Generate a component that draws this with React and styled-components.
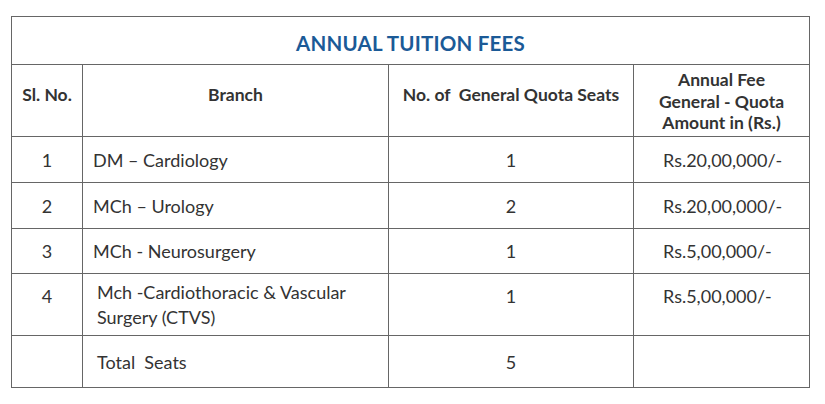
import React from 'react'
import styled, { createGlobalStyle } from 'styled-components';

const GlobalStyle = createGlobalStyle`
  body {
    margin: 0;
    background: #fff;
    font-family: Lato, 'Open Sans', sans-serif;
  }
`;

const Page = styled.div`
  padding: 16px 16px 0 11px;
`;

const FeeTable = styled.table`
  width: 798px;
  border-collapse: collapse;
  table-layout: fixed;
  color: #333;
  font-size: 18px;
`;

const TitleCell = styled.th`
  height: 43px;
  border: 1px solid #666;
  color: #1b5a97;
  font-size: 20.5px;
  font-weight: 700;
  letter-spacing: 0.2px;
  text-align: center;
  vertical-align: middle;
  padding: 4px 0 0;
`;

const HeadCell = styled.th`
  border: 1px solid #666;
  font-weight: 700;
  font-size: 17.5px;
  line-height: 21.5px;
  text-align: center;
  vertical-align: ${p => (p.$multi ? 'middle' : 'top')};
  padding: ${p => (p.$multi ? '2px 4px 0' : '19px 4px 0')};
`;

const Row = styled.tr`
  height: ${p => p.$h}px;
`;

const Cell = styled.td`
  border: 1px solid #666;
  line-height: 25px;
  text-align: ${p => p.$align || 'center'};
  vertical-align: ${p => (p.$top ? 'top' : 'middle')};
  padding: ${p => (p.$top ? '10px' : '1px')} ${p => p.$pr || 0}px 0 ${p => p.$pl || 0}px;
`;

const rows = [
  { no: '1', branch: 'DM – Cardiology', seats: '1', fee: 'Rs.20,00,000/-', h: 46, pl: 10 },
  { no: '2', branch: 'MCh – Urology', seats: '2', fee: 'Rs.20,00,000/-', h: 46, pl: 10 },
  { no: '3', branch: 'MCh - Neurosurgery', seats: '1', fee: 'Rs.5,00,000/-', h: 45, pl: 10 },
  { no: '4', branch: <>Mch -Cardiothoracic &amp; Vascular<br />Surgery (CTVS)</>, seats: '1', fee: 'Rs.5,00,000/-', h: 62, pl: 14, top: true },
]

const App = () => {
  return (
    <Page>
      <GlobalStyle />
      <FeeTable>
        <colgroup>
          <col style={{ width: 71 }} />
          <col style={{ width: 306 }} />
          <col style={{ width: 245 }} />
          <col style={{ width: 176 }} />
        </colgroup>
        <thead>
          <tr>
            <TitleCell colSpan={4}>ANNUAL TUITION FEES</TitleCell>
          </tr>
          <Row $h={72}>
            <HeadCell>Sl. No.</HeadCell>
            <HeadCell>Branch</HeadCell>
            <HeadCell>No. of&nbsp; General Quota Seats</HeadCell>
            <HeadCell $multi>Annual Fee<br />General - Quota<br />Amount in (Rs.)</HeadCell>
          </Row>
        </thead>
        <tbody>
          {rows.map((r) => (
            <Row key={r.no} $h={r.h}>
              <Cell $top={r.top}>{r.no}</Cell>
              <Cell $align='left' $pl={r.pl}>{r.branch}</Cell>
              <Cell $top={r.top}>{r.seats}</Cell>
              <Cell $align='left' $pl={29} $top={r.top}>{r.fee}</Cell>
            </Row>
          ))}
          <Row $h={52}>
            <Cell></Cell>
            <Cell $align='left' $pl={14}>Total&nbsp; Seats</Cell>
            <Cell>5</Cell>
            <Cell></Cell>
          </Row>
        </tbody>
      </FeeTable>
    </Page>
  )
}

export default App
